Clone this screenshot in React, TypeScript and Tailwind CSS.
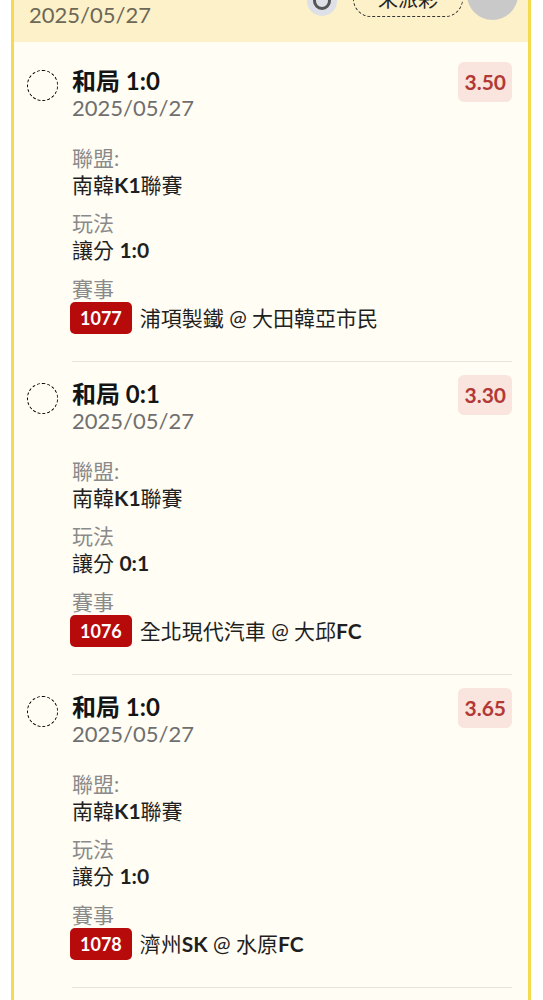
import React from "react";

type Bet = {
  pick: string;
  date: string;
  odds: string;
  league: string;
  play: string;
  matchNo: string;
  home: string;
  away: string;
};

const BETS: Bet[] = [
  { pick: "和局 1:0", date: "2025/05/27", odds: "3.50", league: "南韓K1聯賽", play: "讓分 1:0", matchNo: "1077", home: "浦項製鐵", away: "大田韓亞市民" },
  { pick: "和局 0:1", date: "2025/05/27", odds: "3.30", league: "南韓K1聯賽", play: "讓分 0:1", matchNo: "1076", home: "全北現代汽車", away: "大邱FC" },
  { pick: "和局 1:0", date: "2025/05/27", odds: "3.65", league: "南韓K1聯賽", play: "讓分 1:0", matchNo: "1078", home: "濟州SK", away: "水原FC" },
  { pick: "和局 0:1", date: "2025/05/27", odds: "3.40", league: "南韓K1聯賽", play: "讓分 0:1", matchNo: "1079", home: "江原FC", away: "光州FC" },
];

const FONT = "font-['Lato','Noto_Sans_CJK_TC',sans-serif]";

// latin runs (K1, 1:0, FC ...) are bold, the chinese stays regular
const MixedText = ({ text }: { text: string }) => (
  <>
    {text.split(/([A-Za-z0-9:]+)/).map((part, i) =>
      /[A-Za-z0-9]/.test(part) ? (
        <span key={i} className="font-bold">
          {part}
        </span>
      ) : (
        <React.Fragment key={i}>{part}</React.Fragment>
      )
    )}
  </>
);

export default function App() {
  return (
    <div className={`min-h-screen bg-white ${FONT}`}>
      <div className="-mt-[42px] ml-[11px] mr-[12px] overflow-hidden rounded-xl border-[3px] border-[#f4da4f] bg-[#fffdf4]">
        <TicketHeader />
        <div className="pt-[7px]">
          {BETS.map((bet) => (
            <BetRow key={bet.matchNo} bet={bet} />
          ))}
        </div>
      </div>
    </div>
  );
}

const TicketHeader = () => {
  return (
    <header className="flex items-start justify-between bg-[#fdf1c9] pb-[13px] pl-[15px] pr-[10px] pt-[12px]">
      <div>
        <p className="text-[22px] font-bold leading-[28px] text-[#1d1d1d]">過關 3串1</p>
        <p className="text-[22px] leading-[28px] text-[#6c6857]">2025/05/27</p>
      </div>
      <div className="-mt-[4px] flex items-start">
        <span className="mt-[17px] flex h-[30px] w-[30px] items-center justify-center rounded-full bg-[#dde0e6]">
          <span className="h-[18px] w-[18px] rounded-full border-[3px] border-[#555]" />
        </span>
        <span className="ml-[16px] mt-[12px] flex h-[36px] w-[110px] items-center justify-center rounded-full border-[1.5px] border-dashed border-[#333] text-[20px] text-[#222]">
          未派彩
        </span>
        <span className="ml-[4px] h-[51px] w-[51px] rounded-full bg-[#c9c9c9]" />
      </div>
    </header>
  );
};

const BetRow = ({ bet }: { bet: Bet }) => {
  return (
    <div className="flex gap-[14px] pl-[13px] pr-[16px] pt-[13px]">
      <span className="mt-[8px] h-[31px] w-[31px] shrink-0 rounded-full border-[1.5px] border-dashed border-black" />

      <div className="flex-1 border-b border-[#e6e3dc] pb-[27px]">
        <div className="flex items-start justify-between">
          <div>
            <p className="mt-[6px] text-[24px] font-bold leading-[26px] text-[#141414]">{bet.pick}</p>
            <p className="text-[22px] leading-[28px] text-[#6f6f6f]">{bet.date}</p>
          </div>
          <span className="flex h-[40px] items-center rounded-[6px] bg-[#f9e4de] px-[6px] text-[21px] font-bold text-[#b23935]">
            {bet.odds}
          </span>
        </div>

        <div className="mt-[22px]">
          <p className="text-[21px] leading-[27px] text-[#8a8a8a]">聯盟:</p>
          <p className="text-[21px] leading-[27px] text-[#1f1f1f]">
            <MixedText text={bet.league} />
          </p>
        </div>

        <div className="mt-[11px]">
          <p className="text-[21px] leading-[27px] text-[#8a8a8a]">玩法</p>
          <p className="text-[21px] leading-[27px] text-[#1f1f1f]">
            <MixedText text={bet.play} />
          </p>
        </div>

        <div className="mt-[12px]">
          <p className="text-[21px] leading-[27px] text-[#8a8a8a]">賽事</p>
          <div className="flex h-[32px] items-center gap-[8px]">
            <span className="-ml-[2px] flex h-[32px] items-center rounded-[5px] bg-[#b70b0b] px-[10px] text-[18px] font-bold text-white">
              {bet.matchNo}
            </span>
            <span className="text-[21px] text-[#1f1f1f]">
              <MixedText text={`${bet.home} @ ${bet.away}`} />
            </span>
          </div>
        </div>
      </div>
    </div>
  );
}
